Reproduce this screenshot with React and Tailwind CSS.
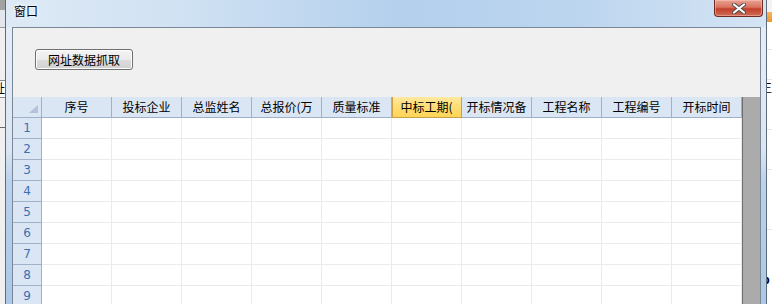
import React from 'react';

const headers = ['序号', '投标企业', '总监姓名', '总报价(万', '质量标准', '中标工期(', '开标情况备', '工程名称', '工程编号', '开标时间'];
const rows = [1, 2, 3, 4, 5, 6, 7, 8, 9, 10];
const selectedCol = 5;

const CloseButton = () => (
    <div className="w-[49px] h-[17px] rounded-b-[4px] border border-t-0 border-[#6e2b22] bg-[linear-gradient(180deg,#e9a394_0%,#d9735f_45%,#c2412c_55%,#cf6a55_100%)] shadow-[inset_0_0_0_1px_rgba(255,210,200,0.45)] flex items-center justify-center">
        <svg width="14" height="11" viewBox="0 0 14 11">
            <path d="M2 1.5 L12 9.5 M12 1.5 L2 9.5" stroke="#4a4a4a" strokeWidth="4" strokeLinecap="round" />
            <path d="M2 1.5 L12 9.5 M12 1.5 L2 9.5" stroke="#ffffff" strokeWidth="2.2" strokeLinecap="round" />
        </svg>
    </div>
);

const LeftBackdrop = () => (
    <div className="w-[5px] h-full flex flex-col bg-[#f0f0f0] overflow-hidden">
        <div className="h-[10px] bg-[#a2a2a2]" />
        <div className="h-[18px] bg-[#e2e7ed] border-b border-[#9a9a9a]" />
        <div className="h-[52px]" />
        <div className="h-[18px] bg-white border-y border-[#8a8a8a] relative overflow-hidden">
            <span className="absolute right-0 top-[-1px] text-[12px] leading-[16px] text-black">址</span>
        </div>
        <div className="h-[29px]" />
        <div className="h-[1px] bg-[#6a6a6a]" />
    </div>
);

const RightBackdrop = () => (
    <div className="w-[5px] h-full flex flex-col bg-white overflow-hidden">
        <div className="h-[12px] bg-[#f3f3f3]" />
        <div className="h-[10px] bg-[linear-gradient(180deg,#f7b65a,#ee9633)]" />
        <div className="h-[28px] border-b border-[#e6e6e6]" />
        <div className="h-[30px] border-b border-[#e6e6e6]" />
        <div className="h-[20px] relative overflow-hidden">
            <span className="absolute left-[-7px] top-[0px] text-[12px] leading-[16px] text-black">王</span>
        </div>
        <div className="h-[30px] border-b border-[#e6e6e6]" />
        <div className="h-[40px] border-b border-[#e6e6e6]" />
        <div className="h-[60px] border-b border-[#e6e6e6]" />
        <div className="h-[43px]" />
        <div className="h-[16px] relative overflow-hidden">
            <span className="absolute left-[-5px] top-[-2px] text-[12px] leading-[16px] font-bold text-black">p</span>
        </div>
    </div>
);

const SideFrame = ({ right }) => (
    <div className={`h-full bg-[linear-gradient(180deg,#e3edf7_0%,#dae6f3_44%,#b9d2ed_56%,#aac8e8_100%)] ${right ? 'w-[6px] border-r border-[#5f6b78]' : 'w-[7px] border-l border-[#5f6b78]'}`} />
);

const GridHeader = () => (
    <div className="flex h-[21px] shrink-0">
        <div className="w-[29px] h-full border-r border-b border-[#9eb1c8] bg-[#dbe6f4] relative">
            <svg className="absolute right-[3px] bottom-[4px]" width="9" height="8" viewBox="0 0 9 8">
                <path d="M9 0 L9 8 L0 8 Z" fill="#b3c2d6" />
            </svg>
        </div>
        {headers.map((h, i) => (
            <div
                key={h}
                className={
                    i === selectedCol
                        ? 'w-[70px] h-full border-r border-b border-[#c9a043] shadow-[inset_1px_0_0_#c9a043] bg-[linear-gradient(180deg,#ffe9a0_0%,#ffdd74_50%,#ffd558_100%)] text-center whitespace-nowrap overflow-hidden text-[12px] leading-[20px] text-black'
                        : 'w-[70px] h-full border-r border-b border-[#9eb1c8] bg-[#dbe6f4] text-center whitespace-nowrap overflow-hidden text-[12px] leading-[20px] text-black'
                }
            >
                {h}
            </div>
        ))}
    </div>
);

const GridRow = ({ n }) => (
    <div className="flex h-[21px] shrink-0">
        <div className="w-[29px] h-full border-r border-b border-[#9eb1c8] bg-[#dbe6f4] text-center text-[12px] leading-[20px] text-[#3a6fb2] font-['DejaVu_Sans',sans-serif]">
            {n}
        </div>
        {headers.map((h) => (
            <div key={h} className="w-[70px] h-full border-r border-b border-[#ebebeb] bg-white" />
        ))}
    </div>
);

export default function App() {
    return (
        <div className="w-[772px] h-[304px] overflow-hidden flex bg-[#f0f0f0] font-['Noto_Sans_CJK_SC','Liberation_Sans',sans-serif]">
            <LeftBackdrop />
            <div className="w-[762px] h-full flex flex-col">
                {/* title bar */}
                <div className="h-[27px] shrink-0 flex justify-between items-start pl-[8px] pr-[3px] border-x border-[#5f6b78] bg-[linear-gradient(90deg,#dde9f5_0%,#d1e2f3_22%,#b4d0ed_52%,#bcd5ef_75%,#d4e4f4_100%)]">
                    <span className="mt-[3px] text-[12px] leading-[16px] text-black [text-shadow:0_0_5px_#ffffff,0_0_3px_#ffffff]">窗口</span>
                    <CloseButton />
                </div>
                <div className="flex-1 flex min-h-0">
                    <SideFrame />
                    <div className="w-[749px] h-full border-l border-t border-r border-[#7b8794] bg-[#f0f0f0] flex flex-col">
                        <div className="flex pt-[21px] pl-[22px]">
                            <button className="block w-[98px] h-[21px] rounded-[3px] border border-[#707070] bg-[linear-gradient(180deg,#f4f4f4_0%,#ebebeb_50%,#dddddd_51%,#d0d0d0_100%)] shadow-[inset_0_0_0_1px_#fcfcfc] text-[12px] leading-[18px] text-black">
                                网址数据抓取
                            </button>
                        </div>
                        <div className="mt-[27px] flex flex-1 min-h-0 overflow-hidden">
                            <div className="w-[729px] flex flex-col">
                                <GridHeader />
                                {rows.map((n) => (
                                    <GridRow key={n} n={n} />
                                ))}
                            </div>
                            <div className="flex-1 border-l border-[#6d6d6d] bg-[#ababab]" />
                        </div>
                    </div>
                    <SideFrame right />
                </div>
            </div>
            <RightBackdrop />
        </div>
    );
}
